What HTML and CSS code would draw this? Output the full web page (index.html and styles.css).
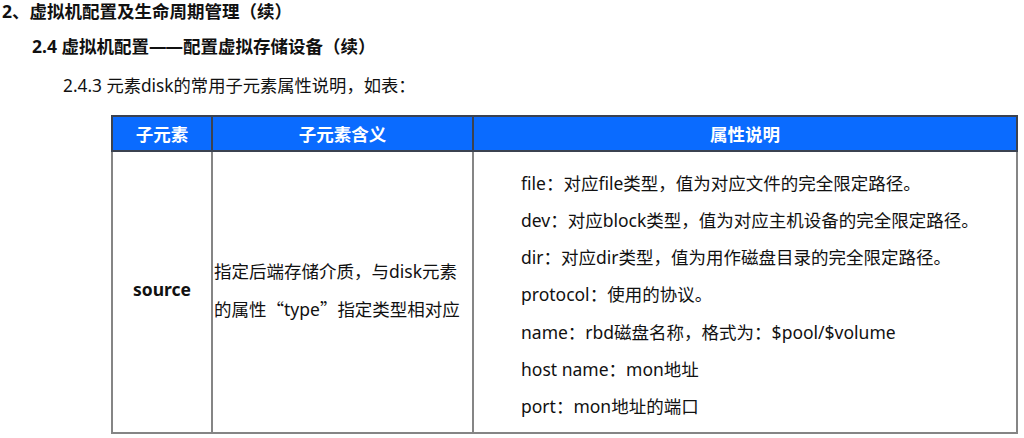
FILE: index.html
```html
<!DOCTYPE html>
<html lang="zh-CN">
<head>
<meta charset="utf-8">
<title>虚拟机配置</title>
<link rel="stylesheet" href="styles.css">
</head>
<body>
<div class="page">
  <h1 class="t1">2、虚拟机配置及生命周期管理（续）</h1>
  <h2 class="t2">2.4 虚拟机配置<span class="dash">——</span>配置虚拟存储设备（续）</h2>
  <p class="t3">2.4.3 元素disk的常用子元素属性说明，如表：</p>
  <table class="tbl">
    <colgroup>
      <col class="c1"><col class="c2"><col class="c3">
    </colgroup>
    <thead>
      <tr><th>子元素</th><th>子元素含义</th><th>属性说明</th></tr>
    </thead>
    <tbody>
      <tr>
        <td class="name">source</td>
        <td class="mean">指定后端存储介质，与disk元素<br>的属性<span class="q">“</span>type<span class="q">”</span>指定类型相对应</td>
        <td class="attrs">
          <div class="line">file：对应file类型，值为对应文件的完全限定路径。</div>
          <div class="line">dev：对应block类型，值为对应主机设备的完全限定路径。</div>
          <div class="line">dir：对应dir类型，值为用作磁盘目录的完全限定路径。</div>
          <div class="line">protocol：使用的协议。</div>
          <div class="line">name：rbd磁盘名称，格式为：$pool/$volume</div>
          <div class="line">host name：mon地址</div>
          <div class="line">port：mon地址的端口</div>
        </td>
      </tr>
    </tbody>
  </table>
</div>
</body>
</html>
```

FILE: styles.css
```css
html, body {
  margin: 0;
  padding: 0;
  background: #ffffff;
}
body {
  font-family: "Noto Sans", "Noto Sans CJK SC", sans-serif;
  color: #111111;
}
.page {
  width: 1024px;
  height: 438px;
  overflow: hidden;
}
.t1 {
  margin: 0;
  padding-left: 2px;
  font-size: 17.5px;
  font-weight: 700;
  line-height: 22px;
}
.t2 {
  margin: 13px 0 0 0;
  padding-left: 32px;
  font-size: 17.5px;
  font-weight: 700;
  line-height: 22px;
}
.dash {
  letter-spacing: -1px;
  padding-right: 1px;
}
.t3 {
  margin: 18px 0 0 0;
  padding-left: 63px;
  font-size: 17.3px;
  font-weight: 400;
  line-height: 22px;
}
.tbl {
  margin: 18px 0 0 111px;
  border-collapse: collapse;
  table-layout: fixed;
  width: 905px;
}
.c1 { width: 100px; }
.c2 { width: 261px; }
.c3 { width: 544px; }
.tbl th {
  background: #0a6bff;
  color: #ffffff;
  font-size: 17.5px;
  font-weight: 700;
  height: 33px;
  padding: 0;
  border: 2px solid #3b4250;
  text-align: center;
  vertical-align: middle;
}
.tbl td {
  border: 2px solid #858585;
  padding: 0;
  vertical-align: middle;
  font-size: 17.5px;
  height: 274px;
}
.name {
  text-align: center;
  font-weight: 700;
  padding-bottom: 6px !important;
}
.mean {
  line-height: 38px;
  padding-left: 1px !important;
  padding-bottom: 5px !important;
}
.q {
  font-family: "Noto Sans CJK SC", sans-serif;
}
.attrs {
  padding-left: 47px !important;
  padding-top: 6px !important;
}
.line {
  line-height: 37.2px;
  white-space: nowrap;
}
```
